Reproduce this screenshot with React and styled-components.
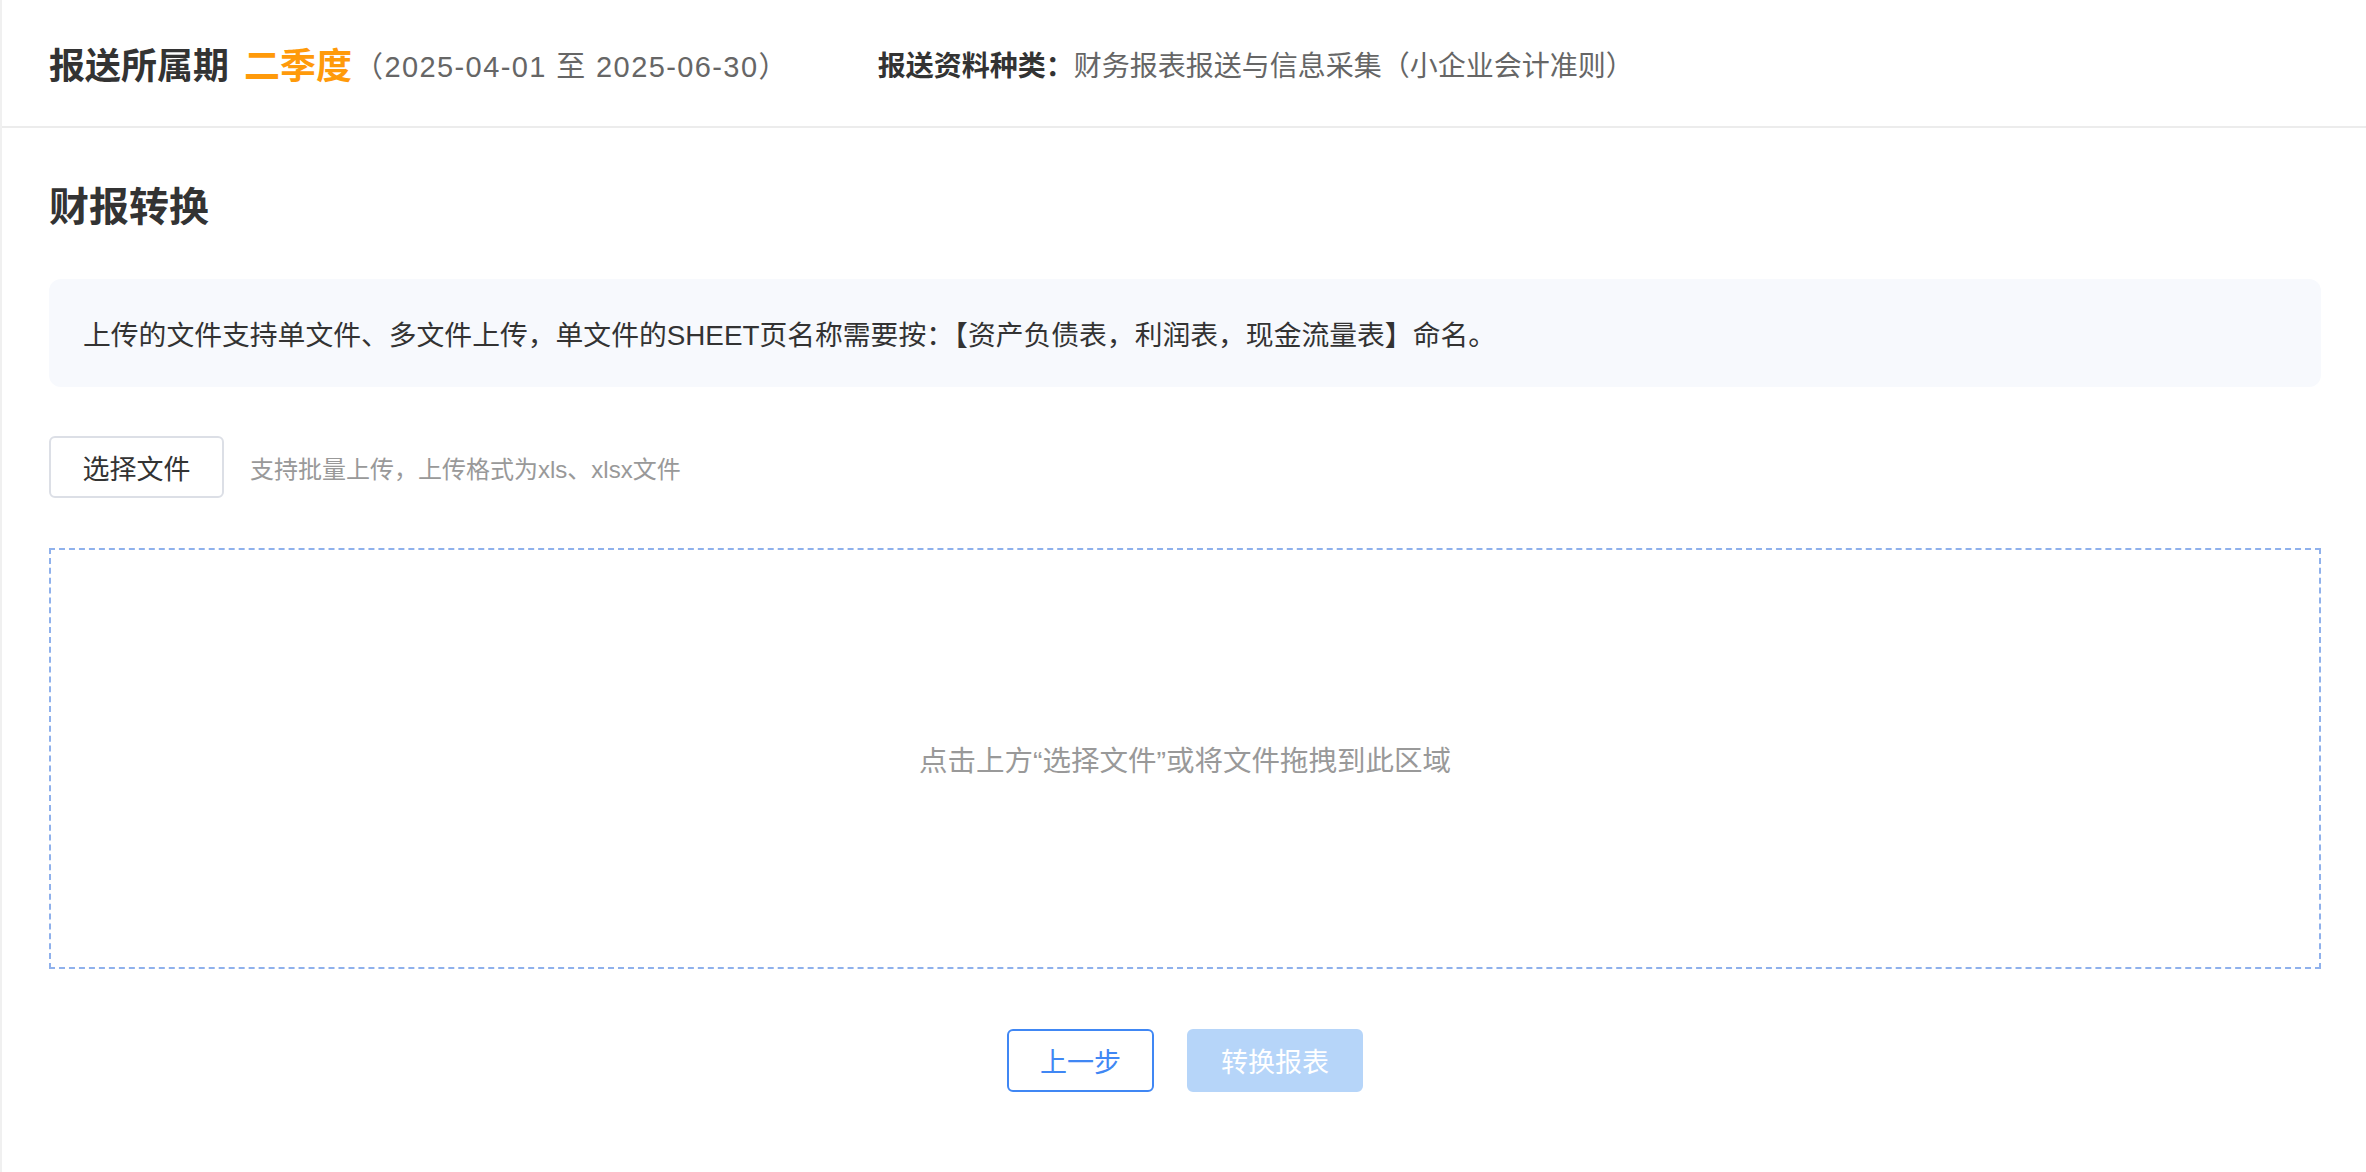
import React from 'react';
import styled, { createGlobalStyle } from 'styled-components';

const GlobalStyle = createGlobalStyle`
  html, body {
    margin: 0;
    padding: 0;
    background: #fff;
  }
  body {
    font-family: "Liberation Sans", "Noto Sans CJK SC", sans-serif;
    color: #333;
  }
  * {
    box-sizing: border-box;
  }
`;

const Page = styled.div`
  min-height: 100vh;
  border-left: 2px solid #f0f0f0;
  background: #fff;
`;

const Header = styled.header`
  height: 128px;
  display: flex;
  align-items: center;
  padding: 7px 47px 0;
  border-bottom: 2px solid #ececec;
  white-space: nowrap;
`;

const PeriodLabel = styled.span`
  font-size: 36px;
  font-weight: 700;
  color: #333;
  line-height: 48px;
`;

const Quarter = styled.span`
  font-size: 36px;
  font-weight: 700;
  color: #ff9a0a;
  line-height: 48px;
  margin-left: 15px;
`;

const DateRange = styled.span`
  font-size: 29px;
  letter-spacing: 1.4px;
  color: #666;
  line-height: 48px;
  margin-left: 2px;
`;

const Category = styled.div`
  margin-left: 89px;
  font-size: 28px;
  line-height: 48px;
  color: #666;

  b {
    font-weight: 700;
    color: #333;
  }
`;

const Main = styled.main`
  padding: 52px 45px 60px 47px;
`;

const Title = styled.h2`
  margin: 0 0 45px;
  font-size: 40px;
  line-height: 54px;
  font-weight: 700;
  color: #333;
`;

const Notice = styled.div`
  height: 108px;
  display: flex;
  align-items: center;
  padding: 0 34px;
  background: #f7f9fd;
  border-radius: 12px;
  font-size: 27.8px;
  color: #333;
`;

const UploadRow = styled.div`
  display: flex;
  align-items: center;
  margin-top: 49px;
`;

const PickButton = styled.button`
  width: 175px;
  height: 62px;
  border: 2px solid #dcdfe6;
  border-radius: 6px;
  background: #fff;
  font-family: inherit;
  font-size: 27px;
  color: #333;
  cursor: pointer;
`;

const Hint = styled.span`
  margin-left: 26px;
  font-size: 24px;
  color: #999;
`;

const DropZone = styled.div`
  margin-top: 50px;
  height: 421px;
  border: 2px dashed #8fb1ec;
  display: flex;
  align-items: center;
  justify-content: center;
  font-size: 28.5px;
  color: #999;
`;

const Actions = styled.div`
  display: flex;
  justify-content: center;
  gap: 33px;
  margin-top: 60px;
`;

const ActionButton = styled.button`
  height: 63px;
  width: ${(p) => p.$width}px;
  border-radius: 6px;
  font-family: inherit;
  font-size: 27px;
  cursor: ${(p) => (p.$disabled ? 'not-allowed' : 'pointer')};
  border: 2px solid ${(p) => (p.$disabled ? '#b6d5f9' : '#4087f4')};
  background: ${(p) => (p.$disabled ? '#b6d5f9' : '#fff')};
  color: ${(p) => (p.$disabled ? '#fff' : '#4087f4')};
`;

export default function App() {
  return (
    <>
      <GlobalStyle />
      <Page>
        <Header>
          <PeriodLabel>报送所属期</PeriodLabel>
          <Quarter>二季度</Quarter>
          <DateRange>（2025-04-01 至 2025-06-30）</DateRange>
          <Category>
            <b>报送资料种类：</b>财务报表报送与信息采集（小企业会计准则）
          </Category>
        </Header>
        <Main>
          <Title>财报转换</Title>
          <Notice>
            上传的文件支持单文件、多文件上传，单文件的SHEET页名称需要按：【资产负债表，利润表，现金流量表】命名。
          </Notice>
          <UploadRow>
            <PickButton>选择文件</PickButton>
            <Hint>支持批量上传，上传格式为xls、xlsx文件</Hint>
          </UploadRow>
          <DropZone>点击上方“选择文件”或将文件拖拽到此区域</DropZone>
          <Actions>
            <ActionButton $width={147}>上一步</ActionButton>
            <ActionButton $width={176} $disabled>
              转换报表
            </ActionButton>
          </Actions>
        </Main>
      </Page>
    </>
  );
}
